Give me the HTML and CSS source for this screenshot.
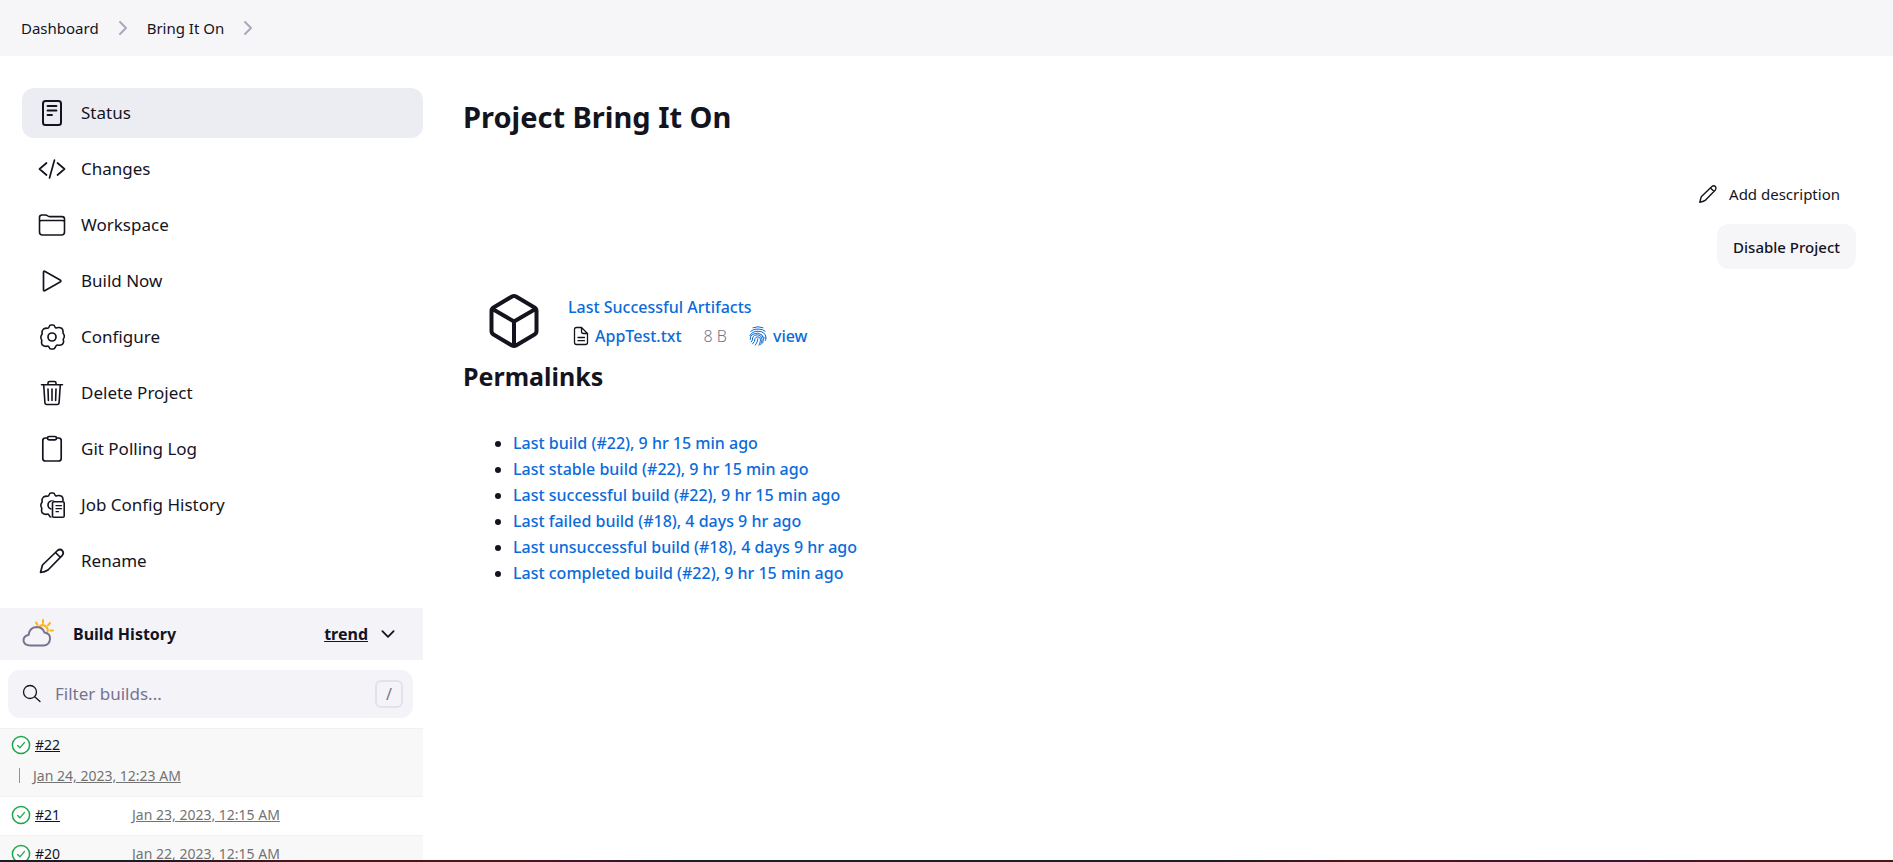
FILE: index.html
```
<!DOCTYPE html>
<html lang="en">
<head>
<meta charset="utf-8">
<title>Bring It On</title>
<link rel="stylesheet" href="styles.css">
</head>
<body>
<svg class="defs" aria-hidden="true">
  <symbol id="chevron" viewBox="0 0 16 16"><path d="M5 2l6 6-6 6" fill="none" stroke="currentColor" stroke-width="2" stroke-linecap="round" stroke-linejoin="round"/></symbol>
  <symbol id="gear" viewBox="0 0 26 26"><path d="M10.200 2.600Q10.600 1 12 1h2q1.400 0 1.800 1.600.5 1.800 2.100 1.200 2.500-.8 4.600.4 1.600 1.400 1.600 3.500-.3 1.400.4 2.200 1.400 2 .3 4.200-1 1.800-.3 2.500.4 2-1 3.500-1.700 1.400-3.800 1.100-1.700-.5-2.300.3-.9 1.200-1.400 2.300Q15.200 25 14 25h-2q-1.400 0-1.800-1.600-.6-1.700-2.100-1.200-2.700.5-4.500-1-1.400-1.600-1-3.600.5-1.200-.3-2.500-1-2.200.3-4.200 1-1 .4-2.200-.2-2.300 1.500-3.700 1.900-1 3.700-.8 1.600.2 2-1.600z" fill="none" stroke="currentColor" stroke-width="1.600" stroke-linejoin="round"/></symbol>
  <symbol id="success" viewBox="0 0 20 20"><circle cx="10" cy="10" r="8.600" fill="#fff" stroke="#1ea64b" stroke-width="1.500"/><path d="M6.600 10.500l2.300 2.300 4.600-5.400" fill="none" stroke="#1ea64b" stroke-width="1.300" stroke-linecap="round" stroke-linejoin="round"/></symbol>
</svg>

<nav class="breadcrumbs" aria-label="Breadcrumb">
  <a href="#">Dashboard</a>
  <svg class="crumb-sep"><use href="#chevron"/></svg>
  <a href="#">Bring It On</a>
  <svg class="crumb-sep"><use href="#chevron"/></svg>
</nav>

<div class="page">
  <aside class="side">
    <nav class="tasks" aria-label="Project tasks">
      <a class="task active" href="#"><svg class="icon" viewBox="0 0 28 28"><g fill="none" stroke="currentColor" stroke-width="2" stroke-linecap="round"><rect x="5" y="2" width="18" height="24" rx="2.500"/><path d="M9.500 7h9M9.500 11.500h9M9.500 16h4.500" stroke-width="1.800"/></g></svg>Status</a>
      <a class="task" href="#"><svg class="icon" viewBox="0 0 28 28"><g fill="none" stroke="currentColor" stroke-width="1.700" stroke-linecap="round" stroke-linejoin="round"><path d="M8.500 8L1.500 14l7 6M19.500 8l7 6-7 6M16.500 5l-5 18"/></g></svg>Changes</a>
      <a class="task" href="#"><svg class="icon" viewBox="0 0 28 28"><g fill="none" stroke="currentColor" stroke-width="1.600" stroke-linejoin="round"><path d="M1.500 21V6.500Q1.500 4 4 4h3.500q1.200 0 2 .8t2.200.8H24q2.500 0 2.500 2.500V21q0 3-3 3h-19q-3 0-3-3zM1.500 11q0-1.500 2-1.500h21q2 0 2 1.500"/></g></svg>Workspace</a>
      <a class="task" href="#"><svg class="icon" viewBox="0 0 28 28"><path d="M5.500 5.200v17.600q0 1.700 1.600.8l15-8.600q1.500-1 0-2l-15-8.600q-1.600-.9-1.600.8z" fill="none" stroke="currentColor" stroke-width="1.700" stroke-linejoin="round"/></svg>Build Now</a>
      <a class="task" href="#"><svg class="icon" viewBox="0 0 28 28"><use href="#gear" x="1" y="1" width="26" height="26"/><circle cx="14" cy="14" r="4" fill="none" stroke="currentColor" stroke-width="1.700"/></svg>Configure</a>
      <a class="task" href="#"><svg class="icon" viewBox="0 0 28 28"><g fill="none" stroke="currentColor" stroke-width="1.600" stroke-linecap="round" stroke-linejoin="round"><path d="M3.500 5.800h21M5.700 6l1.200 17.500q.1 2 2 2h10.200q1.900 0 2-2L22.300 6M10 5.500v-1.500q0-1.500 1.500-1.500h5q1.500 0 1.500 1.500v1.500M10 10l.4 11.500M14 10v11.500M18 10l-.4 11.500"/></g></svg>Delete Project</a>
      <a class="task" href="#"><svg class="icon" viewBox="0 0 28 28"><g fill="none" stroke="currentColor" stroke-width="1.700"><path d="M9.500 3H7.500Q4.800 3 4.800 5.500v18Q4.800 26 7.500 26h13q2.700 0 2.700-2.500v-18Q23.200 3 20.500 3h-2"/><rect x="9.500" y="1.500" width="9" height="3.300" rx="1.600"/></g></svg>Git Polling Log</a>
      <a class="task" href="#"><svg class="icon" viewBox="0 0 28 28"><use href="#gear" x="1" y="1" width="26" height="26"/><circle cx="14" cy="14" r="4" fill="none" stroke="currentColor" stroke-width="1.700"/><path d="M13.500 10h15V28h-15z" fill="#fff"/><g fill="none" stroke="currentColor" stroke-width="1.600" stroke-linecap="round"><rect x="14.500" y="10.700" width="11.700" height="15.500" rx="1.300"/><path d="M18 14.700h5.500M18 17.700h5.500M18 20.700h2.500" stroke-width="1.200"/></g></svg>Job Config History</a>
      <a class="task" href="#"><svg class="icon" viewBox="0 0 28 28"><g fill="none" stroke="currentColor" stroke-width="1.700" stroke-linejoin="round"><path d="M2.500 25.500l2-7.500L19.500 3.500q2.500-2 4.800 0 2 2.500 0 4.800L10 23q-3 2-7.500 2.500zM17.500 5.500l5 5"/></g></svg>Rename</a>
    </nav>

    <section class="history">
      <header class="history-head">
        <svg class="weather" viewBox="0 0 32 32"><g fill="none" stroke-linecap="round"><path d="M21 2v3M14 4.500l1.500 2.300M28 5l-2 2.300M28.300 12.500h2.700M17 9q3.500-3.500 7-.5 3 3 1 6.500" stroke="#fcb415" stroke-width="2"/><path d="M8.500 27.500q-6.500 0-7-5 0-4.500 5-5.500 1-7.500 8-8 6 0 8 5.500 6 1 5.500 6.500-.5 6-6 6.500z" stroke="#77738f" stroke-width="2"/></g></svg>
        <h2>Build History</h2>
        <a class="trend" href="#">trend</a>
        <button class="collapse" type="button" aria-label="Collapse"><svg viewBox="0 0 16 16"><path d="M3 5.500l5 5 5-5" fill="none" stroke="currentColor" stroke-width="1.600" stroke-linecap="round" stroke-linejoin="round"/></svg></button>
      </header>
      <div class="filter">
        <svg viewBox="0 0 20 20"><g fill="none" stroke="currentColor" stroke-width="1.300" stroke-linecap="round"><circle cx="8" cy="8" r="6.500"/><path d="M13 13l5 4.500"/></g></svg>
        <input type="search" placeholder="Filter builds..." aria-label="Filter builds">
        <kbd>/</kbd>
      </div>
      <ul class="builds">
        <li class="build latest"><svg class="ball"><use href="#success"/></svg><a class="num" href="#">#22</a><a class="date" href="#">Jan 24, 2023, 12:23 AM</a></li>
        <li class="build"><svg class="ball"><use href="#success"/></svg><a class="num" href="#">#21</a><a class="date" href="#">Jan 23, 2023, 12:15 AM</a></li>
        <li class="build"><svg class="ball"><use href="#success"/></svg><a class="num" href="#">#20</a><a class="date" href="#">Jan 22, 2023, 12:15 AM</a></li>
      </ul>
    </section>
  </aside>

  <main class="main">
    <h1>Project Bring It On</h1>
    <div class="actions">
      <a class="describe" href="#"><svg viewBox="0 0 28 28"><g fill="none" stroke="currentColor" stroke-width="2" stroke-linejoin="round"><path d="M2.500 25.500l2-7.500L19.500 3.500q2.500-2 4.800 0 2 2.500 0 4.800L10 23q-3 2-7.500 2.500zM17.500 5.500l5 5"/></g></svg>Add description</a>
      <button class="disable" type="button">Disable Project</button>
    </div>
    <section class="artifacts">
      <svg class="package" viewBox="0 0 56 56"><path d="M26 3.500q2-1 4 0l18.500 11q2 1.200 2 3.500v20q0 2.300-2 3.500L30 52.500q-2 1-4 0L7.500 41.500q-2-1.200-2-3.500V18q0-2.300 2-3.500zM6.500 16L28 28.500 49.500 16M28 28.500V53" fill="none" stroke="currentColor" stroke-width="4" stroke-linejoin="round"/></svg>
      <div class="artifact-info">
        <a href="#">Last Successful Artifacts</a>
        <div class="file">
          <svg class="doc" viewBox="0 0 16 20"><g fill="none" stroke="currentColor" stroke-width="1.300" stroke-linejoin="round" stroke-linecap="round"><path d="M3.500 1.500h5l6 6v9q0 2-2 2h-9q-2 0-2-2v-13q0-2 2-2zM8.500 1.500v4q0 2 2 2h4M5 11.500h6.500M5 14.700h6.500"/></g></svg>
          <a href="#">AppTest.txt</a>
          <span class="size">8 B</span>
          <svg class="print" viewBox="0 0 18 20"><g fill="none" stroke="#0b6bda" stroke-width="1" stroke-linecap="round"><path d="M4 1.700q5-2 10 0M1.800 5.200Q4 3 9 3t7.200 2.200M.9 9.700Q3 5.200 9 5.200q7.300.3 8 6.300 0 1.500-.6 3M1.200 13.500Q.8 9.500 4 8.200 9 5.600 13 9q2.600 3.500.8 8M2.200 16Q4 14 3.600 12q.6-3 5.400-3.200 3.900.5 4 5-.2 2.400-1.300 4.700M3.600 18q2.600-2.500 2.300-5.200.6-2 3.100-2t2.500 3q-.2 3-1.500 5.500M6.300 19.200q2.400-3 2.600-6.500M14.300 11q1 1.700 2.500 1"/></g></svg>
          <a href="#">view</a>
        </div>
      </div>
    </section>
    <h2 class="permalinks-title">Permalinks</h2>
    <ul class="permalinks">
      <li><a href="#">Last build (#22), 9 hr 15 min ago</a></li>
      <li><a href="#">Last stable build (#22), 9 hr 15 min ago</a></li>
      <li><a href="#">Last successful build (#22), 9 hr 15 min ago</a></li>
      <li><a href="#">Last failed build (#18), 4 days 9 hr ago</a></li>
      <li><a href="#">Last unsuccessful build (#18), 4 days 9 hr ago</a></li>
      <li><a href="#">Last completed build (#22), 9 hr 15 min ago</a></li>
    </ul>
  </main>
</div>
<div class="edge"></div>
</body>
</html>
```
FILE: styles.css
```
* { box-sizing: border-box; }
body {
  margin: 0;
  height: 100vh;
  overflow: hidden;
  display: flex;
  flex-direction: column;
  background: #fff;
  color: #14141f;
  font: 400 17px/26px "Segoe UI", "Noto Sans", "Open Sans", sans-serif;
}
a { color: #0b6bda; text-decoration: none; }
h1, h2, ul { margin: 0; padding: 0; }
svg { flex: none; }
.defs { position: absolute; width: 0; height: 0; }

.breadcrumbs {
  flex: none;
  display: flex;
  align-items: center;
  gap: 16px;
  height: 56px;
  padding: 0 21px;
  background: #f6f6f8;
  font-size: 15px;
}
.breadcrumbs a { color: inherit; }
.crumb-sep { width: 16px; height: 16px; color: #a9a8bd; }

.page { flex: 1; min-height: 0; display: flex; overflow: hidden; }
.side { flex: none; width: 423px; padding-top: 32px; }
.tasks { display: flex; flex-direction: column; gap: 6px; padding-left: 22px; }
.task {
  display: flex;
  align-items: center;
  gap: 15px;
  height: 50px;
  padding: 0 16px 1px;
  border-radius: 12px;
  color: inherit;
}
.task.active { background: #ecedf3; }
.icon { width: 28px; height: 28px; }

.history { margin-top: 22px; }
.history-head {
  display: flex;
  align-items: center;
  height: 52px;
  padding: 0 26px 0 22px;
  background: #f3f3f8;
}
.history-head h2 { margin-left: 19px; font-size: 16px; font-weight: 700; }
.weather { width: 32px; height: 32px; }
.trend { margin-left: auto; color: inherit; font-size: 16px; font-weight: 700; text-decoration: underline; }
.collapse { margin-left: 11px; padding: 0; border: 0; background: none; color: inherit; }
.collapse svg { display: block; width: 18px; height: 18px; }

.filter {
  display: flex;
  align-items: center;
  height: 48px;
  margin: 10px 10px 10px 8px;
  padding: 0 10px 0 14px;
  border-radius: 12px;
  background: #f3f3f8;
}
.filter svg { width: 20px; height: 20px; }
.filter input {
  flex: 1;
  min-width: 0;
  margin-left: 13px;
  padding: 0;
  border: 0;
  outline: 0;
  background: none;
  color: inherit;
  font: inherit;
}
.filter input::placeholder { color: #77738f; opacity: 1; }
.filter kbd {
  width: 28px;
  height: 28px;
  border: 2px solid #e3e2ec;
  border-radius: 6px;
  color: #77738f;
  font: 16px/24px "Noto Sans", sans-serif;
  text-align: center;
}

.builds { list-style: none; font-size: 14px; line-height: 20px; }
.build {
  display: grid;
  grid-template-columns: 20px 93px 1fr;
  align-items: center;
  column-gap: 4px;
  height: 39px;
  padding: 0 11px 3px;
  border-top: 1px solid #f1f1f2;
}
.build:nth-child(odd) { background: #f8f8f8; }
.ball { width: 20px; height: 20px; }
.num { color: inherit; text-decoration: underline; }
.date { color: #737373; text-decoration: underline; }
.build.latest { height: 68px; padding: 5px 11px 9px; row-gap: 8px; }
.latest .date {
  grid-column: 1 / -1;
  display: flex;
  align-items: center;
  gap: 13px;
  padding-left: 8px;
}
.latest .date::before { content: ""; width: 1px; height: 15px; background: #8b939c; }

.main { flex: 1; min-width: 0; padding: 40px 37px 0 40px; }
h1 { font-size: 29px; font-weight: 700; line-height: 42px; }
.actions {
  display: flex;
  flex-direction: column;
  align-items: flex-end;
  gap: 17px;
  margin-top: 43px;
  font-size: 15px;
}
.describe { display: flex; align-items: center; gap: 11px; margin-right: 16px; color: inherit; }
.describe svg { width: 20px; height: 20px; }
.disable {
  height: 45px;
  padding: 0 16px;
  border: 0;
  border-radius: 12px;
  background: #f6f6f9;
  color: inherit;
  font: inherit;
  font-weight: 500;
}
.artifacts {
  display: flex;
  align-items: center;
  gap: 26px;
  margin-top: 24px;
  padding-left: 23px;
  font-size: 16px;
  font-weight: 500;
}
.package { width: 56px; height: 56px; }
.artifact-info { display: flex; flex-direction: column; gap: 3px; }
.file { display: flex; align-items: center; padding-left: 5px; }
.doc { width: 16px; height: 20px; margin-right: 6px; }
.size { margin: 0 22px; color: #77738f; font-weight: 300; }
.print { width: 18px; height: 20px; margin-right: 6px; }
.permalinks-title { margin-top: 10px; font-size: 25px; font-weight: 700; line-height: 34px; }
.permalinks { margin-top: 37px; padding-left: 50px; font-size: 16px; font-weight: 500; }

.edge {
  flex: none;
  height: 2px;
  background: linear-gradient(90deg, #1c1a26 8%, #4c1519 17% 27%, #3b1530 31%, #1c1c24 36% 64%, #4c1519 72%, #34153a 85%, #4c1519 93%);
}
```
